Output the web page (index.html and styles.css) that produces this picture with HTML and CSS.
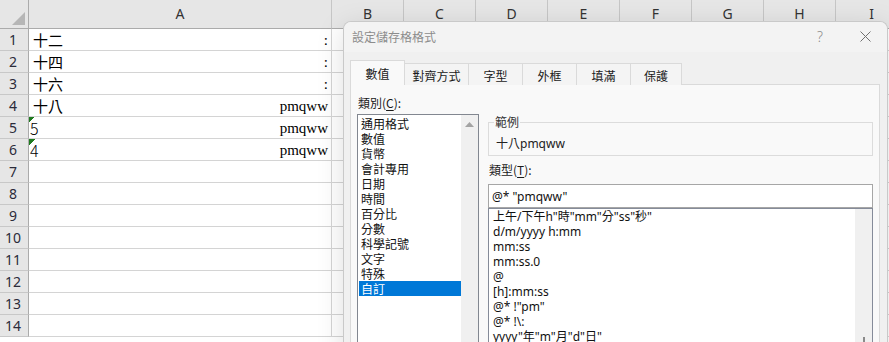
FILE: index.html
```html
<!DOCTYPE html>
<html lang="zh-Hant">
<head>
<meta charset="utf-8">
<title>設定儲存格格式</title>
<link rel="stylesheet" href="styles.css">
</head>
<body>
<div class="sheet">
  <div class="hrow">
    <div class="corner"><span class="corner-tri"></span></div>
    <div class="ch wa">A</div>
    <div class="ch">B</div><div class="ch">C</div><div class="ch">D</div><div class="ch">E</div>
    <div class="ch">F</div><div class="ch">G</div><div class="ch">H</div><div class="ch">I</div>
  </div>
  <div class="row"><div class="rh">1</div><div class="c wa"><span class="cjk">十二</span><span class="ser">:</span></div><div class="c"></div><div class="c"></div><div class="c"></div><div class="c"></div><div class="c"></div><div class="c"></div><div class="c"></div><div class="c"></div></div>
  <div class="row"><div class="rh">2</div><div class="c wa"><span class="cjk">十四</span><span class="ser">:</span></div><div class="c"></div><div class="c"></div><div class="c"></div><div class="c"></div><div class="c"></div><div class="c"></div><div class="c"></div><div class="c"></div></div>
  <div class="row"><div class="rh">3</div><div class="c wa"><span class="cjk">十六</span><span class="ser">:</span></div><div class="c"></div><div class="c"></div><div class="c"></div><div class="c"></div><div class="c"></div><div class="c"></div><div class="c"></div><div class="c"></div></div>
  <div class="row"><div class="rh">4</div><div class="c wa"><span class="cjk">十八</span><span class="ser">pmqww</span></div><div class="c"></div><div class="c"></div><div class="c"></div><div class="c"></div><div class="c"></div><div class="c"></div><div class="c"></div><div class="c"></div></div>
  <div class="row"><div class="rh">5</div><div class="c wa flag"><span class="num">5</span><span class="ser">pmqww</span></div><div class="c"></div><div class="c"></div><div class="c"></div><div class="c"></div><div class="c"></div><div class="c"></div><div class="c"></div><div class="c"></div></div>
  <div class="row"><div class="rh">6</div><div class="c wa flag"><span class="num">4</span><span class="ser">pmqww</span></div><div class="c"></div><div class="c"></div><div class="c"></div><div class="c"></div><div class="c"></div><div class="c"></div><div class="c"></div><div class="c"></div></div>
  <div class="row"><div class="rh">7</div><div class="c wa"></div><div class="c"></div><div class="c"></div><div class="c"></div><div class="c"></div><div class="c"></div><div class="c"></div><div class="c"></div><div class="c"></div></div>
  <div class="row"><div class="rh">8</div><div class="c wa"></div><div class="c"></div><div class="c"></div><div class="c"></div><div class="c"></div><div class="c"></div><div class="c"></div><div class="c"></div><div class="c"></div></div>
  <div class="row"><div class="rh">9</div><div class="c wa"></div><div class="c"></div><div class="c"></div><div class="c"></div><div class="c"></div><div class="c"></div><div class="c"></div><div class="c"></div><div class="c"></div></div>
  <div class="row"><div class="rh">10</div><div class="c wa"></div><div class="c"></div><div class="c"></div><div class="c"></div><div class="c"></div><div class="c"></div><div class="c"></div><div class="c"></div><div class="c"></div></div>
  <div class="row"><div class="rh">11</div><div class="c wa"></div><div class="c"></div><div class="c"></div><div class="c"></div><div class="c"></div><div class="c"></div><div class="c"></div><div class="c"></div><div class="c"></div></div>
  <div class="row"><div class="rh">12</div><div class="c wa"></div><div class="c"></div><div class="c"></div><div class="c"></div><div class="c"></div><div class="c"></div><div class="c"></div><div class="c"></div><div class="c"></div></div>
  <div class="row"><div class="rh">13</div><div class="c wa"></div><div class="c"></div><div class="c"></div><div class="c"></div><div class="c"></div><div class="c"></div><div class="c"></div><div class="c"></div><div class="c"></div></div>
  <div class="row"><div class="rh">14</div><div class="c wa"></div><div class="c"></div><div class="c"></div><div class="c"></div><div class="c"></div><div class="c"></div><div class="c"></div><div class="c"></div><div class="c"></div></div>
</div>

<div class="dlg">
  <div class="titlebar">
    <span class="title">設定儲存格格式</span>
    <span class="help">?</span>
    <svg class="close" width="11" height="11" viewBox="0 0 11 11"><path d="M0.5 0.5 L10.5 10.5 M10.5 0.5 L0.5 10.5" stroke="#707070" stroke-width="1" fill="none"/></svg>
  </div>
  <div class="dbody">
    <div class="tabs">
      <div class="tab sel t1">數值</div>
      <div class="tab t2">對齊方式</div>
      <div class="tab t3">字型</div>
      <div class="tab t3">外框</div>
      <div class="tab t3">填滿</div>
      <div class="tab t4">保護</div>
    </div>
    <div class="panel">
      <div class="leftcol">
        <div class="lbl">類別(<u>C</u>):</div>
        <div class="catlist">
          <div class="items">
            <div class="it">通用格式</div>
            <div class="it">數值</div>
            <div class="it">貨幣</div>
            <div class="it">會計專用</div>
            <div class="it">日期</div>
            <div class="it">時間</div>
            <div class="it">百分比</div>
            <div class="it">分數</div>
            <div class="it">科學記號</div>
            <div class="it">文字</div>
            <div class="it">特殊</div>
            <div class="it on">自訂</div>
          </div>
          <div class="vsb">
            <svg class="uparrow" width="9" height="5" viewBox="0 0 9 5"><path d="M4.5 0 L9 5 L0 5 Z" fill="#a3a3a3"/></svg>
          </div>
        </div>
      </div>
      <div class="rightcol">
        <fieldset class="sample">
          <legend>範例</legend>
          <div class="sampletext">十八pmqww</div>
        </fieldset>
        <div class="lbl lbl2">類型(<u>T</u>):</div>
        <div class="input">@* "pmqww"</div>
        <div class="fmtlist">
          <div class="fitems">
            <div class="fi">上午/下午h"時"mm"分"ss"秒"</div>
            <div class="fi">d/m/yyyy h:mm</div>
            <div class="fi">mm:ss</div>
            <div class="fi">mm:ss.0</div>
            <div class="fi">@</div>
            <div class="fi">[h]:mm:ss</div>
            <div class="fi">@* !"pm"</div>
            <div class="fi">@* !\:</div>
            <div class="fi">yyyy"年"m"月"d"日"</div>
          </div>
          <div class="vsb2"><div class="thumb"></div></div>
        </div>
      </div>
    </div>
  </div>
</div>
</body>
</html>
```

FILE: styles.css
```css
html, body {
  margin: 0;
  padding: 0;
  overflow: hidden;
  background: #ffffff;
  width: 889px;
  height: 342px;
}
* { box-sizing: border-box; }

.sheet {
  display: flex;
  flex-direction: column;
  width: 950px;
}
.hrow {
  display: flex;
  height: 29px;
  flex: none;
}
.corner {
  width: 29px;
  flex: none;
  background: #e6e6e6;
  border-right: 1px solid #ababab;
  border-bottom: 1px solid #ababab;
  display: flex;
  align-items: flex-end;
  justify-content: flex-end;
  padding: 0 3px 3px 0;
}
.corner-tri {
  width: 0;
  height: 0;
  border-left: 13px solid transparent;
  border-bottom: 13px solid #b6b6b6;
}
.ch {
  width: 72px;
  flex: none;
  background: #e6e6e6;
  border-right: 1px solid #c6c6c6;
  border-bottom: 1px solid #ababab;
  font-family: "Noto Sans", "Open Sans", sans-serif;
  font-size: 14px;
  color: #333333;
  display: flex;
  align-items: center;
  justify-content: center;
  padding-bottom: 1px;
}
.ch.wa { width: 303px; }

.row {
  display: flex;
  height: 22px;
  flex: none;
}
.rh {
  width: 29px;
  flex: none;
  background: #e6e6e6;
  border-right: 1px solid #ababab;
  border-bottom: 1px solid #c8c8c8;
  font-family: "Noto Sans", "Open Sans", sans-serif;
  font-size: 14px;
  color: #2b2b3a;
  display: flex;
  align-items: center;
  justify-content: center;
  padding-right: 2px;
}
.c {
  width: 72px;
  flex: none;
  border-right: 1px solid #d4d4d4;
  border-bottom: 1px solid #d4d4d4;
}
.c.wa {
  width: 303px;
  display: flex;
  align-items: center;
  justify-content: space-between;
  padding: 1px 3px 0 4px;
  color: #000;
  line-height: 20px;
}
.c.flag {
  background: linear-gradient(135deg, #1f7a1f 50%, transparent 50%) no-repeat 0 0 / 6px 6px;
  padding-left: 1px;
}
.cjk {
  font-family: "Noto Sans CJK TC", sans-serif;
  font-size: 15px;
  font-weight: 400;
}
.num {
  font-family: "Noto Sans CJK TC", sans-serif;
  font-size: 16px;
  font-weight: 300;
}
.ser {
  font-family: "Liberation Serif", serif;
  font-size: 15px;
  font-weight: 700;
}
.ser:not(:only-child) { font-weight: 400; }

/* dialog */
.dlg {
  position: absolute;
  left: 343px;
  top: 21px;
  width: 545px;
  height: 340px;
  border: 1px solid #c9c9c9;
  border-bottom: none;
  border-radius: 8px 8px 0 0;
  background: #f0f0f0;
  box-shadow: 0 6px 28px rgba(0, 0, 0, 0.13);
  overflow: hidden;
  font-family: "Noto Sans", "Noto Sans CJK TC", sans-serif;
  font-size: 12px;
  color: #1a1a1a;
}
.titlebar {
  height: 30px;
  background: #f3f3f3;
  display: flex;
  align-items: center;
  padding: 0 16px 2px 8px;
}
.title {
  flex: 1;
  font-family: "Noto Sans CJK TC", sans-serif;
  font-size: 12px;
  color: #8c8c8c;
}
.help {
  font-family: "Noto Sans", sans-serif;
  font-size: 14px;
  font-weight: 300;
  color: #8c8c8c;
  margin-right: 37px;
}
.close { display: block; }

.dbody {
  padding: 8px 0 0 6px;
}
.tabs {
  display: flex;
  align-items: flex-end;
  height: 25px;
  margin-bottom: -1px;
}
.tab {
  flex: none;
  height: 22px;
  border-top: 1px solid #dadada;
  border-right: 1px solid #dadada;
  background: #f4f4f4;
  font-family: "Noto Sans CJK TC", sans-serif;
  font-size: 12px;
  color: #1a1a1a;
  display: flex;
  align-items: center;
  justify-content: center;
  padding-top: 1px;
}
.tab.sel {
  height: 25px;
  border-left: 1px solid #dadada;
  background: #f9f9f9;
  position: relative;
  z-index: 1;
  padding-top: 0;
}
.t1 { width: 55px; }
.t2 { width: 64px; }
.t3 { width: 54px; }
.t4 { width: 51px; }

.panel {
  width: 530px;
  height: 300px;
  border: 1px solid #dadada;
  background: #f9f9f9;
  display: flex;
  gap: 9px;
  padding: 0 0 0 6px;
}
.leftcol {
  width: 122px;
  flex: none;
  display: flex;
  flex-direction: column;
  padding-top: 10px;
}
.leftcol > *, .rightcol > * { flex: none; }
.lbl {
  font-family: "Noto Sans CJK TC", sans-serif;
  font-size: 12px;
  line-height: 16px;
  height: 16px;
  padding-left: 1px;
  color: #1a1a1a;
}
.lbl u { text-underline-offset: 2px; }
.catlist {
  margin-top: 3px;
  height: 240px;
  border: 1px solid #828790;
  background: #ffffff;
  display: flex;
}
.items {
  flex: 1;
  padding: 1px 0 0 1px;
}
.it {
  height: 15px;
  line-height: 15px;
  padding-left: 2px;
  font-family: "Noto Sans CJK TC", sans-serif;
  font-size: 12px;
  color: #111;
}
.it.on {
  background: #0078d7;
  color: #ffffff;
}
.vsb {
  width: 17px;
  flex: none;
  background: #f0f0f0;
  display: flex;
  justify-content: center;
  padding-top: 7px;
}
.uparrow { display: block; }

.rightcol {
  width: 385px;
  flex: none;
  display: flex;
  flex-direction: column;
  padding-top: 29px;
}
.sample {
  margin: 0;
  padding: 0 0 0 7px;
  border: 1px solid #dcdcdc;
  height: 42px;
  min-width: 0;
}
.sample legend {
  padding: 0 1px;
  margin-left: -2px;
  font-family: "Noto Sans CJK TC", sans-serif;
  font-size: 12px;
  line-height: 16px;
  color: #333;
}
.sampletext {
  padding-top: 6px;
  line-height: 16px;
  font-size: 12px;
  color: #222;
}
.lbl2 {
  margin-top: 6px;
  padding-left: 1px;
}
.input {
  margin-top: 6px;
  height: 24px;
  border: 1px solid #a6a6a6;
  background: #ffffff;
  padding: 0 0 0 3px;
  display: flex;
  align-items: center;
  font-size: 12px;
  color: #111;
}
.fmtlist {
  height: 150px;
  border: 1px solid #858b99;
  background: #ffffff;
  display: flex;
}
.fitems {
  flex: 1;
  padding-left: 4px;
}
.fi {
  height: 15px;
  line-height: 15px;
  font-size: 12px;
  color: #111;
  white-space: nowrap;
}
.vsb2 {
  width: 17px;
  flex: none;
  background: #f0f0f0;
  display: flex;
  flex-direction: column;
  align-items: center;
  padding-top: 128px;
}
.thumb {
  width: 2px;
  height: 12px;
  background: #8a8a8a;
}
```
